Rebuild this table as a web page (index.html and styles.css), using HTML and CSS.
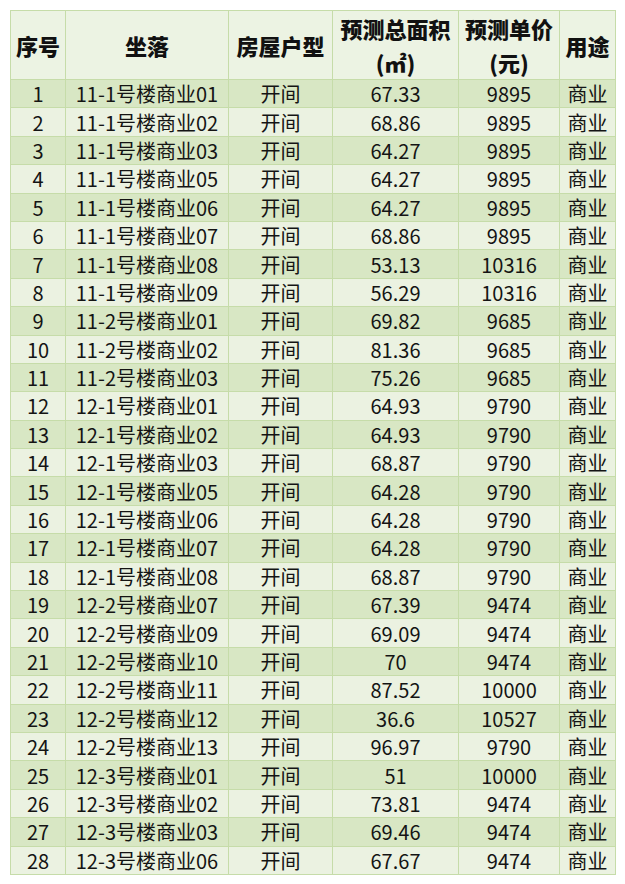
FILE: index.html
```html
<!DOCTYPE html>
<html lang="zh">
<head>
<meta charset="utf-8">
<link rel="stylesheet" href="styles.css">
</head>
<body>
<table class="sheet">
<colgroup>
<col class="c1"><col class="c2"><col class="c3"><col class="c4"><col class="c5"><col class="c6">
</colgroup>
<thead>
<tr><th>序号</th><th>坐落</th><th>房屋户型</th><th>预测总面积<br>(㎡)</th><th>预测单价<br>(元)</th><th>用途</th></tr>
</thead>
<tbody>
<tr><td>1</td><td>11-1号楼商业01</td><td>开间</td><td>67.33</td><td>9895</td><td>商业</td></tr>
<tr><td>2</td><td>11-1号楼商业02</td><td>开间</td><td>68.86</td><td>9895</td><td>商业</td></tr>
<tr><td>3</td><td>11-1号楼商业03</td><td>开间</td><td>64.27</td><td>9895</td><td>商业</td></tr>
<tr><td>4</td><td>11-1号楼商业05</td><td>开间</td><td>64.27</td><td>9895</td><td>商业</td></tr>
<tr><td>5</td><td>11-1号楼商业06</td><td>开间</td><td>64.27</td><td>9895</td><td>商业</td></tr>
<tr><td>6</td><td>11-1号楼商业07</td><td>开间</td><td>68.86</td><td>9895</td><td>商业</td></tr>
<tr><td>7</td><td>11-1号楼商业08</td><td>开间</td><td>53.13</td><td>10316</td><td>商业</td></tr>
<tr><td>8</td><td>11-1号楼商业09</td><td>开间</td><td>56.29</td><td>10316</td><td>商业</td></tr>
<tr><td>9</td><td>11-2号楼商业01</td><td>开间</td><td>69.82</td><td>9685</td><td>商业</td></tr>
<tr><td>10</td><td>11-2号楼商业02</td><td>开间</td><td>81.36</td><td>9685</td><td>商业</td></tr>
<tr><td>11</td><td>11-2号楼商业03</td><td>开间</td><td>75.26</td><td>9685</td><td>商业</td></tr>
<tr><td>12</td><td>12-1号楼商业01</td><td>开间</td><td>64.93</td><td>9790</td><td>商业</td></tr>
<tr><td>13</td><td>12-1号楼商业02</td><td>开间</td><td>64.93</td><td>9790</td><td>商业</td></tr>
<tr><td>14</td><td>12-1号楼商业03</td><td>开间</td><td>68.87</td><td>9790</td><td>商业</td></tr>
<tr><td>15</td><td>12-1号楼商业05</td><td>开间</td><td>64.28</td><td>9790</td><td>商业</td></tr>
<tr><td>16</td><td>12-1号楼商业06</td><td>开间</td><td>64.28</td><td>9790</td><td>商业</td></tr>
<tr><td>17</td><td>12-1号楼商业07</td><td>开间</td><td>64.28</td><td>9790</td><td>商业</td></tr>
<tr><td>18</td><td>12-1号楼商业08</td><td>开间</td><td>68.87</td><td>9790</td><td>商业</td></tr>
<tr><td>19</td><td>12-2号楼商业07</td><td>开间</td><td>67.39</td><td>9474</td><td>商业</td></tr>
<tr><td>20</td><td>12-2号楼商业09</td><td>开间</td><td>69.09</td><td>9474</td><td>商业</td></tr>
<tr><td>21</td><td>12-2号楼商业10</td><td>开间</td><td>70</td><td>9474</td><td>商业</td></tr>
<tr><td>22</td><td>12-2号楼商业11</td><td>开间</td><td>87.52</td><td>10000</td><td>商业</td></tr>
<tr><td>23</td><td>12-2号楼商业12</td><td>开间</td><td>36.6</td><td>10527</td><td>商业</td></tr>
<tr><td>24</td><td>12-2号楼商业13</td><td>开间</td><td>96.97</td><td>9790</td><td>商业</td></tr>
<tr><td>25</td><td>12-3号楼商业01</td><td>开间</td><td>51</td><td>10000</td><td>商业</td></tr>
<tr><td>26</td><td>12-3号楼商业02</td><td>开间</td><td>73.81</td><td>9474</td><td>商业</td></tr>
<tr><td>27</td><td>12-3号楼商业03</td><td>开间</td><td>69.46</td><td>9474</td><td>商业</td></tr>
<tr><td>28</td><td>12-3号楼商业06</td><td>开间</td><td>67.67</td><td>9474</td><td>商业</td></tr>
</tbody>
</table>
</body>
</html>
```
FILE: styles.css
```css
html, body {
  margin: 0;
  padding: 0;
  background: #ffffff;
}
body {
  padding: 10px 10px 0 10px;
  font-family: "Noto Sans CJK SC", "Noto Sans", sans-serif;
  color: #141414;
}
.sheet {
  border-collapse: collapse;
  table-layout: fixed;
  width: 605px;
  border: 1px solid #c6dca9;
}
.c1 { width: 55px; }
.c2 { width: 163px; }
.c3 { width: 104px; }
.c4 { width: 126px; }
.c5 { width: 101px; }
.c6 { width: 56px; }
.sheet th,
.sheet td {
  border: 1px solid #c6dca9;
  padding: 0;
  text-align: center;
  white-space: nowrap;
  overflow: hidden;
}
.sheet th {
  height: 67px;
  font-size: 22px;
  font-weight: 900;
  line-height: 34px;
  background: #ecf3e3;
  color: #111111;
}
.sheet td {
  height: 27.4px;
  font-size: 20px;
  line-height: 27px;
}
.sheet tbody tr:nth-child(odd) td {
  background: #d8e7c4;
}
.sheet tbody tr:nth-child(even) td {
  background: #ebf2e1;
}
```
